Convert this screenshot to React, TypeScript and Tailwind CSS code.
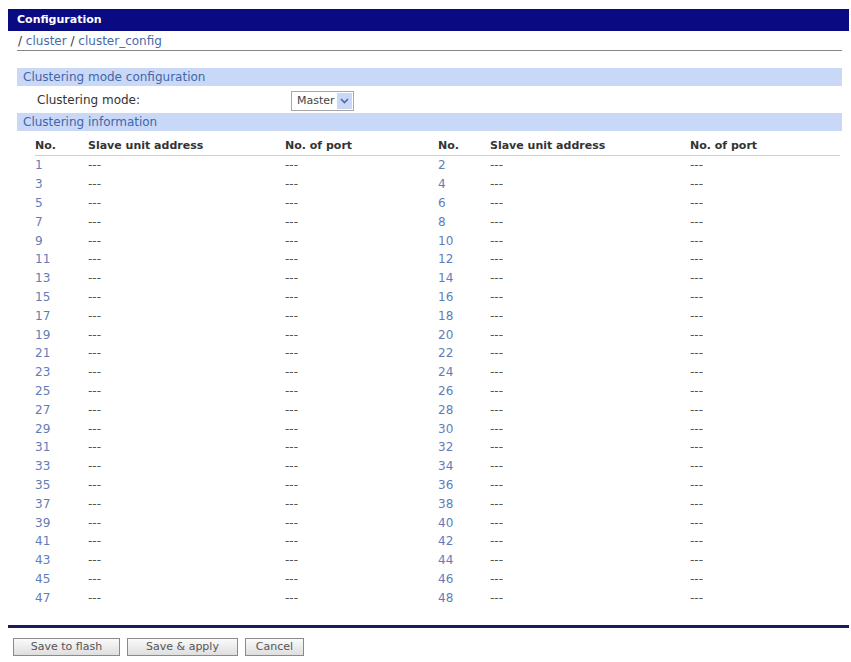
const rows = Array.from({ length: 24 }, (_, i) => i);

function SectionBar({ title }: { title: string }) {
  return (
    <div className="flex h-[18px] items-center bg-[#c9d8f6] pl-[6px] text-[12px] text-[#4266aa]">{title}</div>
  );
}

function Btn({ label, width }: { label: string; width: string }) {
  return (
    <button
      type="button"
      className={`h-[18px] ${width} border border-[#8a8a8a] bg-gradient-to-b from-[#fafafa] to-[#dedede] text-[11px] text-[#555]`}
    >
      {label}
    </button>
  );
}

export default function App() {
  return (
    <div className="min-h-[662px] bg-white pt-[9px] pl-[8px] pr-[2px] font-['DejaVu_Sans',Verdana,sans-serif] text-[#222]">
      <div className="flex h-[22px] items-center bg-[#0a0a82] pl-[9px] text-[11px] font-bold text-white">Configuration</div>

      <div className="ml-[9px] mr-[7px]">
        <div className="flex h-[20px] items-center border-b border-[#888] pl-[1px] text-[12px] text-[#4a6aa8]">
          <span className="text-[#333]">/&nbsp;</span>cluster<span className="text-[#333]">&nbsp;/&nbsp;</span>cluster_config
        </div>

        <div className="mt-[17px]">
          <SectionBar title="Clustering mode configuration" />
          <div className="flex h-[27px] items-center text-[12px] text-[#333]">
            <span className="w-[274px] pl-[20px]">Clustering mode:</span>
            <div className="mt-[3px] flex h-[20px] w-[63px] items-center border border-[#a8a8a8] bg-white">
              <span className="flex-1 pl-[5px] text-[11px] text-[#444]">Master</span>
              <span className="mr-[1px] flex h-[16px] w-[15px] items-center justify-center bg-[#c9d8f6]">
                <svg width="9" height="6" viewBox="0 0 9 6">
                  <path d="M1 1 L4.5 4.5 L8 1" fill="none" stroke="#4a6bb0" strokeWidth="1.6" />
                </svg>
              </span>
            </div>
          </div>
          <SectionBar title="Clustering information" />
        </div>

        <div className="ml-[18px] mr-[2px] mt-[6px]">
          <div className="grid h-[19px] grid-cols-[53px_197px_153px_52px_200px_1fr] items-center border-b border-[#cfcfcf] text-[11px] font-bold text-[#333]">
            <span>No.</span>
            <span>Slave unit address</span>
            <span>No. of port</span>
            <span>No.</span>
            <span>Slave unit address</span>
            <span>No. of port</span>
          </div>
          {rows.map((i) => (
            <div key={i} className="grid h-[18.8px] grid-cols-[53px_197px_153px_52px_200px_1fr] items-center text-[12px]">
              <span className="text-[#5f7db8]">{i * 2 + 1}</span>
              <span className="text-[#555]">---</span>
              <span className="text-[#555]">---</span>
              <span className="text-[#5f7db8]">{i * 2 + 2}</span>
              <span className="text-[#555]">---</span>
              <span className="text-[#555]">---</span>
            </div>
          ))}
        </div>
      </div>

      <div className="mt-[18px] h-[3px] bg-[#1c1a5e]"></div>

      <div className="mt-[10px] flex gap-[7px] pl-[5px]">
        <Btn label="Save to flash" width="w-[107px]" />
        <Btn label="Save & apply" width="w-[111px]" />
        <Btn label="Cancel" width="w-[59px]" />
      </div>
    </div>
  );
}
